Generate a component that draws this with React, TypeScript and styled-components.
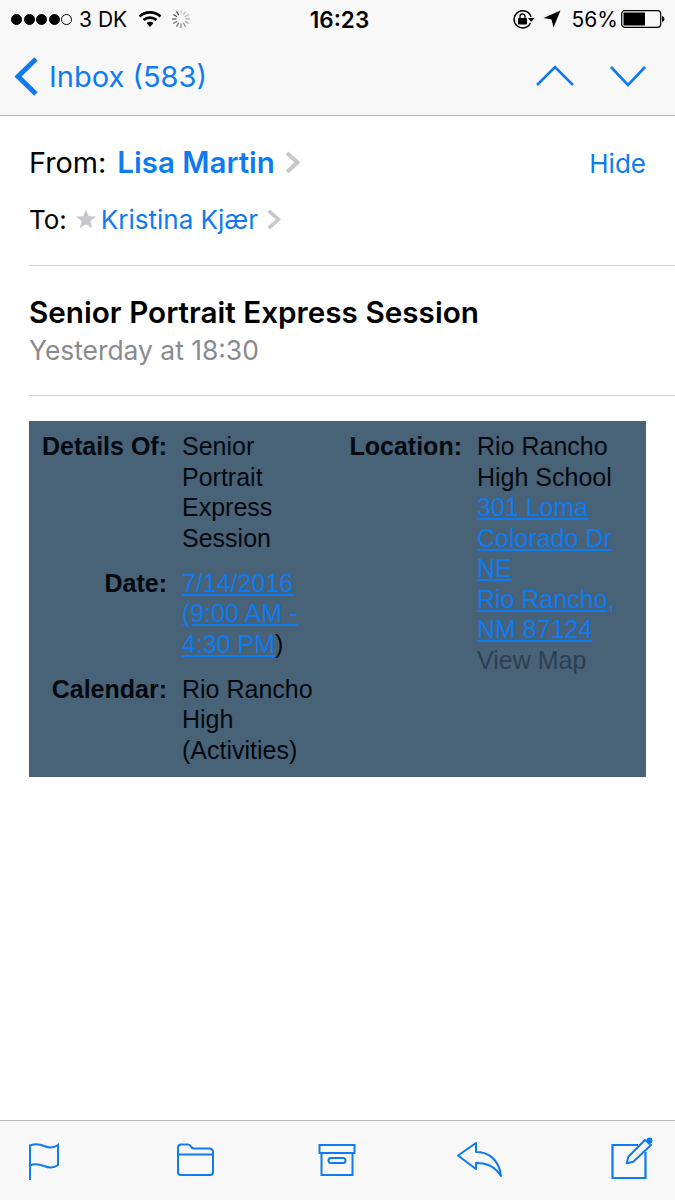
import React from "react";
import styled, { createGlobalStyle } from "styled-components";

const BLUE = "#0e7bf0";

const GlobalStyle = createGlobalStyle`
  html, body {
    margin: 0;
    padding: 0;
    background: #fff;
    font-family: "Inter", "Liberation Sans", sans-serif;
  }
`;

export default function App() {
  return (
    <Page>
      <GlobalStyle />
      <TopBar>
        <StatusBar>
          <StatusLeft>
            <Signal>
              <Dot />
              <Dot />
              <Dot />
              <Dot />
              <Dot $empty />
            </Signal>
            <Carrier>3 DK</Carrier>
            <WifiIcon />
            <Spinner />
          </StatusLeft>
          <Clock>16:23</Clock>
          <StatusRight>
            <LockIcon />
            <ArrowIcon />
            <Percent>56%</Percent>
            <Battery />
          </StatusRight>
        </StatusBar>
        <NavBar>
          <BackLink>
            <svg width="26" height="42" viewBox="0 0 26 42">
              <path d="M22 3 L4 20.5 L22 38" fill="none" stroke={BLUE} strokeWidth="5" />
            </svg>
            <BackText>Inbox (583)</BackText>
          </BackLink>
          <NavArrows>
            <svg width="40" height="24" viewBox="0 0 40 24">
              <path d="M2 21 L20 3 L38 21" fill="none" stroke={BLUE} strokeWidth="2.6" />
            </svg>
            <svg width="40" height="24" viewBox="0 0 40 24">
              <path d="M3 3 L20 21 L37 3" fill="none" stroke={BLUE} strokeWidth="2.6" />
            </svg>
          </NavArrows>
        </NavBar>
      </TopBar>

      <Content>
        <AddressBlock>
          <FromRow>
            <FromGroup>
              <FromLabel>From:</FromLabel>
              <Sender>Lisa Martin</Sender>
              <Chevron $height={23} viewBox="0 0 15 23">
                <path d="M2 2 L12.500 11.500 L2 21" fill="none" stroke="#c7c7cc" strokeWidth="4" />
              </Chevron>
            </FromGroup>
            <HideLink>Hide</HideLink>
          </FromRow>
          <ToRow>
            <ToLabel>To:</ToLabel>
            <Star viewBox="0 0 24 24">
              <path d="M12 1.5 L15 9 L23 9.4 L16.8 14.4 L19 22.3 L12 17.8 L5 22.3 L7.2 14.4 L1 9.4 L9 9 Z" fill="#c8c8cc" />
            </Star>
            <Recipient>Kristina Kjær</Recipient>
            <Chevron $height={21} viewBox="0 0 15 23">
              <path d="M2 2 L12.500 11.500 L2 21" fill="none" stroke="#c7c7cc" strokeWidth="4" />
            </Chevron>
          </ToRow>
        </AddressBlock>
        <SubjectBlock>
          <Subject>Senior Portrait Express Session</Subject>
          <Timestamp>Yesterday at 18:30</Timestamp>
        </SubjectBlock>
        <DetailsCard>
          <DetailsColumn>
            <Pair $labelWidth={138} $valueWidth={134}>
              <PairLabel>Details Of:</PairLabel>
              <PairValue>Senior Portrait Express Session</PairValue>
            </Pair>
            <Pair $labelWidth={138} $valueWidth={134}>
              <PairLabel>Date:</PairLabel>
              <PairValue>
                <MailLink>7/14/2016 (9:00 AM - 4:30 PM</MailLink>)
              </PairValue>
            </Pair>
            <Pair $labelWidth={138} $valueWidth={134}>
              <PairLabel>Calendar:</PairLabel>
              <PairValue>Rio Rancho High (Activities)</PairValue>
            </Pair>
          </DetailsColumn>
          <DetailsColumn>
            <Pair $labelWidth={146} $valueWidth={140}>
              <PairLabel>Location:</PairLabel>
              <PairValue>
                Rio Rancho High School
                <br />
                <MailLink>301 Loma Colorado Dr NE</MailLink>
                <br />
                <MailLink>Rio Rancho, NM 87124</MailLink>
                <br />
                <MapLink>View Map</MapLink>
              </PairValue>
            </Pair>
          </DetailsColumn>
        </DetailsCard>
      </Content>

      <Toolbar>
        <ToolIcon $width={32} $left={28} viewBox="0 0 32 44">
          <path d="M2 43 L2 8.500 C8 6 12 7 16 9 C21 11 26 11 30 8 L30 28 C26 31 21 31 16 29 C11 27 7 26 2 28.500" fill="none" stroke={BLUE} strokeWidth="2" />
        </ToolIcon>
        <ToolIcon $width={40} $left={115} viewBox="0 0 40 44">
          <path d="M3 11 Q3 7.500 6 7.500 L13 7.500 Q15 7.500 16 9.500 Q17 11.500 19 11.500 L34 11.500 Q38 11.500 38 15 L38 35 Q38 38 35 38 L6 38 Q3 38 3 35 Z M3 17.500 L38 17.500" fill="none" stroke={BLUE} strokeWidth="2" />
        </ToolIcon>
        <ToolIcon $width={38} $left={103} viewBox="0 0 38 44">
          <path d="M1.500 8 L36.500 8 L36.500 16 L1.500 16 Z M3.500 16 L3.500 38 L34.500 38 L34.500 16 M13 21 L25 21 Q27.500 21 27.500 23.500 Q27.500 26 25 26 L13 26 Q10.500 26 10.500 23.500 Q10.500 21 13 21 Z" fill="none" stroke={BLUE} strokeWidth="2" />
        </ToolIcon>
        <ToolIcon $width={46} $left={100} viewBox="0 0 46 44">
          <path d="M2 18.500 L20 6 L20 15 C32 15 43 22 45 39 C39 30 32 26 20 26 L20 32 Z" fill="none" stroke={BLUE} strokeWidth="2" strokeLinejoin="round" />
        </ToolIcon>
        <ToolIcon $width={44} $left={109} viewBox="0 0 44 44">
          <path d="M27 8 L1.500 8 L1.500 41 L34.500 41 L34.500 15" fill="none" stroke={BLUE} strokeWidth="2.2" />
          <path d="M15.700 26.300 L17.300 19.700 L34 3 L40 8 L22.300 24.700 Z" fill="none" stroke={BLUE} strokeWidth="2" strokeLinejoin="round" />
          <circle cx="38.500" cy="3.500" r="3" fill={BLUE} />
        </ToolIcon>
      </Toolbar>
    </Page>
  );
}

function WifiIcon() {
  return (
    <svg width="24" height="18" viewBox="0 0 24 18">
      <path d="M1.500 6.500 C7 1 17 1 22.500 6.500" fill="none" stroke="#000" strokeWidth="2.600" />
      <path d="M5.500 10 C9 6.800 15 6.800 18.500 10" fill="none" stroke="#000" strokeWidth="2.600" />
      <path d="M8.500 13 L12 17 L15.500 13 C13.500 11.200 10.500 11.200 8.500 13 Z" fill="#000" />
    </svg>
  );
}

function Spinner() {
  const spokes = Array.from({ length: 12 }, (_, i) => i);
  return (
    <SpinnerSvg viewBox="-10 -10 20 20">
      {spokes.map((i) => (
        <line
          key={i}
          x1="0"
          y1="-4.500"
          x2="0"
          y2="-9"
          stroke="#000"
          strokeWidth="1.300"
          opacity={0.15 + (i / 11) * 0.55}
          transform={`rotate(${i * 30})`}
        />
      ))}
    </SpinnerSvg>
  );
}

function LockIcon() {
  return (
    <LockSvg viewBox="0 0 23 21">
      <path d="M18.500 14 A8.600 8.600 0 1 1 19 8" fill="none" stroke="#000" strokeWidth="1.500" />
      <path d="M16 9 L22.500 9 L19.200 13 Z" fill="#000" />
      <rect x="6" y="9" width="9" height="6.500" rx="1" fill="#000" />
      <path d="M8 9.500 L8 7.500 A2.500 2.500 0 0 1 13 7.500 L13 9.500" fill="none" stroke="#000" strokeWidth="1.300" />
    </LockSvg>
  );
}

function ArrowIcon() {
  return (
    <svg width="18" height="18" viewBox="0 0 18 18">
      <path d="M17.500 0.500 L10.500 17.500 L8.500 9.500 L0.500 8 Z" fill="#000" />
    </svg>
  );
}

function Battery() {
  return (
    <svg width="44" height="18" viewBox="0 0 44 18">
      <rect x="0.700" y="0.700" width="39" height="16.600" rx="3" fill="none" stroke="#000" strokeWidth="1.200" />
      <rect x="2.500" y="2.500" width="21.500" height="13" fill="#000" />
      <path d="M41 6 Q43.500 6.500 43.500 9 Q43.500 11.500 41 12 Z" fill="#000" />
    </svg>
  );
}

const Page = styled.div`
  width: 675px;
  height: 1200px;
  display: flex;
  flex-direction: column;
  overflow: hidden;
  background: #fff;
`;

const TopBar = styled.header`
  height: 115px;
  flex: none;
  background: #f8f8f8;
  border-bottom: 1px solid #b9b9bb;
  box-sizing: content-box;
`;

const StatusBar = styled.div`
  height: 38px;
  padding: 0 10px 0 11px;
  display: grid;
  grid-template-columns: 1fr auto 1fr;
  align-items: center;
  color: #000;
`;

const StatusLeft = styled.div`
  display: flex;
  align-items: center;
`;

const StatusRight = styled.div`
  display: flex;
  align-items: center;
  justify-content: flex-end;
  gap: 10px;
`;

const Signal = styled.div`
  display: flex;
  gap: 1.5px;
`;

const Dot = styled.span<{ $empty?: boolean }>`
  width: 11px;
  height: 11px;
  box-sizing: border-box;
  border-radius: 50%;
  background: ${(p) => (p.$empty ? "transparent" : "#000")};
  border: 1px solid #000;
`;

const Carrier = styled.span`
  font-size: 21px;
  margin: 0 11px 0 7px;
`;

const SpinnerSvg = styled.svg`
  width: 20px;
  height: 20px;
  margin-left: 9px;
`;

const LockSvg = styled.svg`
  width: 23px;
  height: 21px;
  margin-right: -2px;
`;

const Clock = styled.span`
  font-size: 22.5px;
  font-weight: 600;
  margin-left: 3px;
`;

const Percent = styled.span`
  font-size: 21px;
  margin: 0 -7px 0 1px;
`;

const NavBar = styled.nav`
  height: 77px;
  padding: 0 27px 0 14px;
  display: flex;
  align-items: center;
  justify-content: space-between;
`;

const BackLink = styled.div`
  display: flex;
  align-items: center;
  gap: 9px;
`;

const BackText = styled.span`
  font-size: 29px;
  color: ${BLUE};
`;

const NavArrows = styled.div`
  display: flex;
  gap: 33px;
  margin-bottom: 2px;
`;

const Content = styled.main`
  flex: 1;
  padding-left: 29px;
`;

const AddressBlock = styled.section`
  height: 150px;
  padding-right: 29px;
  box-sizing: border-box;
  padding-top: 28px;
  border-bottom: 1px solid #cfcfd2;
`;

const FromRow = styled.div`
  display: flex;
  align-items: center;
  justify-content: space-between;
  height: 36px;
`;

const FromGroup = styled.div`
  display: flex;
  align-items: center;
`;

const FromLabel = styled.span`
  font-size: 28.8px;
  color: #000;
  margin-right: 11px;
`;

const Sender = styled.span`
  font-size: 29.5px;
  font-weight: 600;
  color: ${BLUE};
  margin-right: 10px;
`;

const Chevron = styled.svg<{ $height: number }>`
  height: ${(p) => p.$height}px;
  width: ${(p) => (p.$height * 15) / 23}px;
  flex: none;
`;

const HideLink = styled.span`
  font-size: 26px;
  color: ${BLUE};
  margin-top: 2px;
`;

const ToRow = styled.div`
  display: flex;
  align-items: center;
  height: 34px;
  margin-top: 22px;
`;

const ToLabel = styled.span`
  font-size: 26px;
  color: #000;
  margin-right: 8px;
`;

const Star = styled.svg`
  width: 22px;
  height: 22px;
  margin-right: 4px;
`;

const Recipient = styled.span`
  font-size: 26px;
  color: ${BLUE};
  margin-right: 9px;
`;

const SubjectBlock = styled.section`
  height: 130px;
  box-sizing: border-box;
  padding-top: 28px;
  border-bottom: 1px solid #cfcfd2;
`;

const Subject = styled.div`
  font-size: 29.7px;
  font-weight: 600;
  line-height: 36px;
  color: #000;
`;

const Timestamp = styled.div`
  font-size: 26.4px;
  line-height: 36px;
  margin-top: 2px;
  color: #8a8a8e;
`;

const DetailsCard = styled.section`
  width: 617px;
  height: 356px;
  margin-top: 25px;
  background: #486278;
  display: grid;
  grid-template-columns: 287px 1fr;
  padding-top: 10px;
  box-sizing: border-box;
  font-family: "Liberation Sans", Arial, sans-serif;
  font-size: 25px;
  line-height: 30.5px;
  color: #03090f;
`;

const DetailsColumn = styled.div`
  display: flex;
  flex-direction: column;
  gap: 14.5px;
`;

const Pair = styled.div<{ $labelWidth: number; $valueWidth: number }>`
  display: grid;
  grid-template-columns: ${(p) => p.$labelWidth}px ${(p) => p.$valueWidth}px;
  column-gap: 15px;
`;

const PairLabel = styled.div`
  font-weight: 700;
  text-align: right;
`;

const PairValue = styled.div``;

const MailLink = styled.span`
  color: ${BLUE};
  text-decoration: underline;
`;

const MapLink = styled.span`
  color: #2c3f53;
`;

const Toolbar = styled.footer`
  height: 80px;
  flex: none;
  box-sizing: border-box;
  background: #f8f8f8;
  border-top: 1px solid #b9b9bb;
  padding-top: 16px;
  display: flex;
  align-items: flex-start;
`;

const ToolIcon = styled.svg<{ $width: number; $left: number }>`
  width: ${(p) => p.$width}px;
  height: 44px;
  flex: none;
  margin-left: ${(p) => p.$left}px;
  overflow: visible;
`;
